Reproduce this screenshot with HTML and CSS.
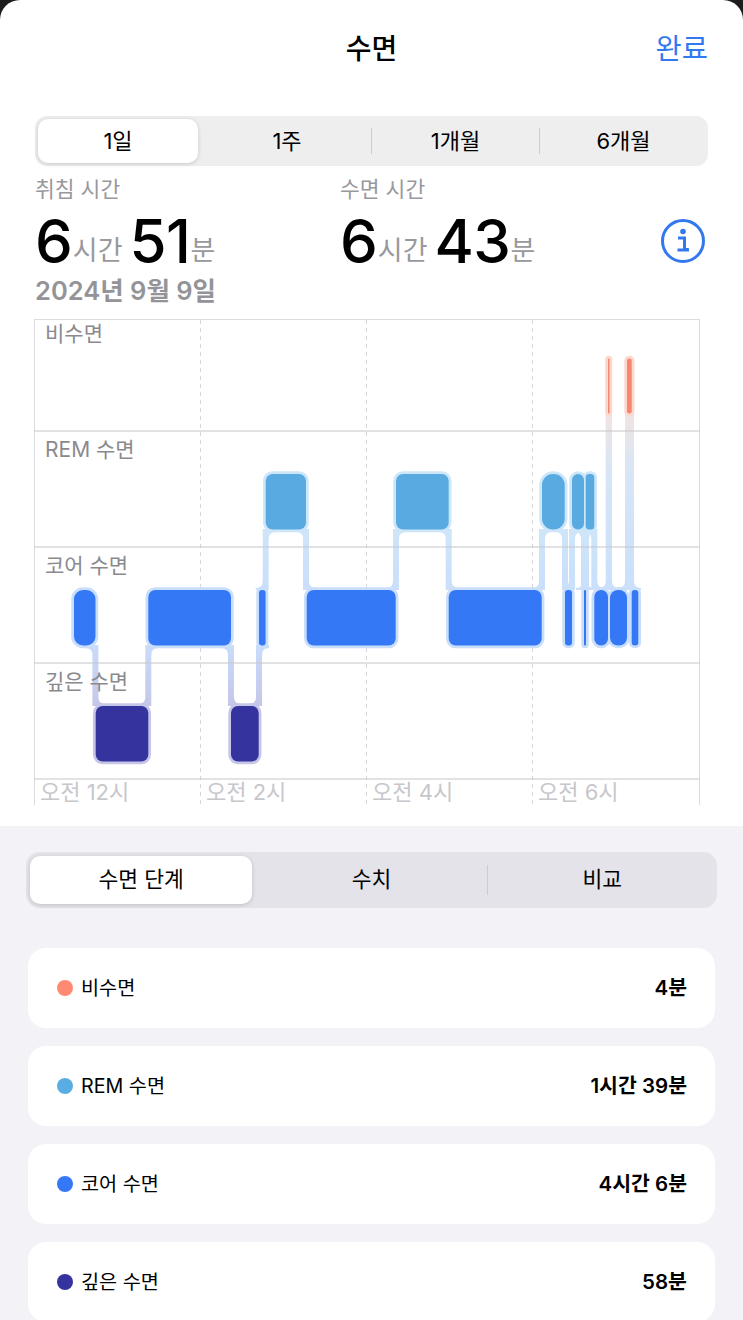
FILE: index.html
```html
<!DOCTYPE html>
<html lang="ko">
<head>
	<meta charset="utf-8">
	<title>수면</title>
	<link rel="stylesheet" href="styles.css">
</head>
<body>
	<div class="sheet">
		<header class="topbar">
			<span></span>
			<h1 class="title">수면</h1>
			<a class="done">완료</a>
		</header>

		<!-- range picker -->
		<div class="seg seg-range">
			<div class="seg-item selected">1일</div>
			<div class="seg-item">1주</div>
			<div class="seg-item divided">1개월</div>
			<div class="seg-item divided">6개월</div>
		</div>

		<div class="stats">
			<div class="stat stat-bed">
				<div class="stat-label">취침 시간</div>
				<div class="stat-value"><b>6</b><span class="unit">시간</span><b class="next">51</b><span class="unit">분</span></div>
				<div class="stat-date">2024년 9월 9일</div>
			</div>
			<div class="stat">
				<div class="stat-label">수면 시간</div>
				<div class="stat-value"><b>6</b><span class="unit">시간</span><b class="next">43</b><span class="unit">분</span></div>
			</div>
			<svg class="info" width="46" height="46" viewBox="0 0 46 46">
				<circle cx="23" cy="23" r="20.5" fill="none" stroke="#3478f0" stroke-width="3"/>
				<circle cx="23" cy="13.5" r="2.8" fill="#3478f0"/>
				<path d="M18 20H24.5V31.5H28.5M17.5 32H29" fill="none" stroke="#3478f0" stroke-width="3"/>
			</svg>
		</div>

		<!-- y/x values are page pixels, viewBox starts at the chart top -->
		<svg class="chart" width="743" height="510" viewBox="0 316 743 510">
			<defs>
				<linearGradient id="gradRem" gradientUnits="userSpaceOnUse" x1="0" y1="530" x2="0" y2="590">
					<stop offset="0" stop-color="#cfe5f9"/>
					<stop offset="1" stop-color="#c9dffb"/>
				</linearGradient>
				<linearGradient id="gradDeep" gradientUnits="userSpaceOnUse" x1="0" y1="646" x2="0" y2="706">
					<stop offset="0" stop-color="#c9dcfa"/>
					<stop offset="1" stop-color="#c5c6e8"/>
				</linearGradient>
				<linearGradient id="gradAwake" gradientUnits="userSpaceOnUse" x1="0" y1="356" x2="0" y2="590">
					<stop offset="0" stop-color="#fbd9cf"/>
					<stop offset="0.25" stop-color="#f1e4e2"/>
					<stop offset="0.5" stop-color="#d6e6f7"/>
					<stop offset="1" stop-color="#c9dffb"/>
				</linearGradient>

				<path id="remA" fill="url(#gradRem)" d="M-10 529H3V581Q3 588 10 588V590H-3V539Q-3 532 -10 532Z"/>
				<path id="remB" fill="url(#gradRem)" d="M10 529H-3V581Q-3 588 -10 588V590H3V539Q3 532 10 532Z"/>
				<path id="deepA" fill="url(#gradDeep)" d="M-10 645H3V697Q3 704 10 704V706H-3V655Q-3 648 -10 648Z"/>
				<path id="deepB" fill="url(#gradDeep)" d="M10 645H-3V697Q-3 704 -10 704V706H3V655Q3 648 10 648Z"/>

				<g id="barsAwake">
					<rect x="608" y="358.5" width="1.5" height="55" rx="0.7"/>
					<rect x="627" y="358.5" width="4.7" height="55" rx="2.3"/>
				</g>
				<g id="barsRem">
					<rect x="265.7" y="474" width="40.3" height="55.5" rx="7"/>
					<rect x="396" y="474" width="52.7" height="55.5" rx="7"/>
					<rect x="542" y="474" width="22.7" height="55.5" rx="11"/>
					<rect x="572" y="474" width="12" height="55.5" rx="6"/>
					<rect x="585.7" y="474" width="8.6" height="55.5" rx="3.5"/>
				</g>
				<g id="barsCore">
					<rect x="74" y="590" width="21.5" height="55.5" rx="9"/>
					<rect x="148.3" y="590" width="82.7" height="55.5" rx="7"/>
					<rect x="259" y="590" width="6.6" height="55.5" rx="3"/>
					<rect x="306.7" y="590" width="89" height="55.5" rx="7"/>
					<rect x="448.7" y="590" width="93" height="55.5" rx="7"/>
					<rect x="565" y="590" width="7" height="55.5" rx="3"/>
					<rect x="584" y="590" width="2" height="55.5" rx="1"/>
					<rect x="594.3" y="590" width="13.7" height="55.5" rx="6.8"/>
					<rect x="610" y="590" width="17" height="55.5" rx="8"/>
					<rect x="631.7" y="590" width="6.6" height="55.5" rx="3"/>
				</g>
				<g id="barsDeep">
					<rect x="95.7" y="706" width="52.6" height="55.5" rx="7"/>
					<rect x="231" y="706" width="27.7" height="55.5" rx="7"/>
				</g>
			</defs>

			<!-- links between stages -->
			<use href="#deepA" x="95.4"/>
			<use href="#deepB" x="148.3"/>
			<use href="#deepA" x="231"/>
			<use href="#deepB" x="259"/>
			<use href="#remB" x="265.7"/>
			<use href="#remA" x="306"/>
			<use href="#remB" x="396"/>
			<use href="#remA" x="448.7"/>
			<use href="#remB" x="542"/>
			<use href="#remA" x="565"/>
			<use href="#remB" x="572"/>
			<use href="#remA" x="584"/>
			<use href="#remB" x="586"/>
			<use href="#remA" x="594.3"/>
			<path fill="url(#gradAwake)" d="M605.7 360Q605.7 356 608.8 356Q612 356 612 360V581Q612 588 619 588V590H598.7V588Q605.7 588 605.7 581Z"/>
			<path fill="url(#gradAwake)" d="M625 360Q625 356 629.5 356Q634 356 634 360V581Q634 588 641 588V590H618V588Q625 588 625 581Z"/>

			<!-- grid -->
			<line class="grid-soft" x1="34" y1="319.5" x2="700" y2="319.5"/>
			<line class="grid-soft" x1="34.5" y1="319" x2="34.5" y2="805"/>
			<line class="grid-soft" x1="699.5" y1="319" x2="699.5" y2="805"/>
			<line class="grid-dash" x1="200.5" y1="320" x2="200.5" y2="805"/>
			<line class="grid-dash" x1="366.5" y1="320" x2="366.5" y2="805"/>
			<line class="grid-dash" x1="532.5" y1="320" x2="532.5" y2="805"/>
			<line class="grid-line" x1="34" y1="431" x2="700" y2="431"/>
			<line class="grid-line" x1="34" y1="547" x2="700" y2="547"/>
			<line class="grid-line" x1="34" y1="663" x2="700" y2="663"/>
			<line class="grid-line" x1="34" y1="779" x2="700" y2="779"/>

			<!-- blocks: halo pass, then solid pass so halos never cover a neighbour -->
			<use href="#barsAwake" class="halo-awake"/>
			<use href="#barsRem" class="halo-rem"/>
			<use href="#barsCore" class="halo-core"/>
			<use href="#barsDeep" class="halo-deep"/>
			<use href="#barsAwake" class="fill-awake"/>
			<use href="#barsRem" class="fill-rem"/>
			<use href="#barsCore" class="fill-core"/>
			<use href="#barsDeep" class="fill-deep"/>

			<text class="stage" x="45" y="341">비수면</text>
			<text class="stage" x="45" y="457">REM 수면</text>
			<text class="stage" x="45" y="573">코어 수면</text>
			<text class="stage" x="45" y="689">깊은 수면</text>
			<text class="hour" x="40" y="800">오전 12시</text>
			<text class="hour" x="206" y="800">오전 2시</text>
			<text class="hour" x="372" y="800">오전 4시</text>
			<text class="hour" x="538" y="800">오전 6시</text>
		</svg>
	</div>

	<main class="lower">
		<div class="seg seg-mode">
			<div class="seg-item selected">수면 단계</div>
			<div class="seg-item">수치</div>
			<div class="seg-item divided">비교</div>
		</div>

		<div class="card">
			<span class="dot dot-awake"></span>
			<span class="card-name">비수면</span>
			<span class="card-value">4분</span>
		</div>
		<div class="card">
			<span class="dot dot-rem"></span>
			<span class="card-name">REM 수면</span>
			<span class="card-value">1시간 39분</span>
		</div>
		<div class="card">
			<span class="dot dot-core"></span>
			<span class="card-name">코어 수면</span>
			<span class="card-value">4시간 6분</span>
		</div>
		<div class="card">
			<span class="dot dot-deep"></span>
			<span class="card-name">깊은 수면</span>
			<span class="card-value">58분</span>
		</div>
	</main>
</body>
</html>
```

FILE: styles.css
```css
* {
	box-sizing: border-box;
}

body {
	margin: 0;
	height: 1320px;
	overflow: hidden;
	background: #f2f2f7;
	font-family: Inter, "Noto Sans CJK KR", sans-serif;
	color: #000;
}

.sheet {
	height: 826px;
	background: #fff;
	border-radius: 20px 20px 0 0;
	box-shadow: 0 -20px 0 20px #1c1c1e;
}

/* header */
.topbar {
	height: 96px;
	display: grid;
	grid-template-columns: 1fr auto 1fr;
	align-items: center;
	padding: 0 35px 3px;
}

.title {
	margin: 0;
	font-size: 28px;
	font-weight: 500;
}

.done {
	justify-self: end;
	font-size: 28.5px;
	color: #3478f0;
}

/* segmented controls */
.seg {
	display: grid;
	grid-template-rows: minmax(0, 1fr);
}

.seg-range {
	margin: 20px 35px 0;
	width: 673px;
	height: 50px;
	grid-template-columns: repeat(4, 168px);
	background: #eeeeef;
	border-radius: 12px;
}

.seg-mode {
	margin: 0 26px;
	height: 56px;
	grid-template-columns: repeat(3, 1fr);
	background: #e3e3e9;
	border-radius: 14px;
}

.seg-item {
	display: flex;
	align-items: center;
	justify-content: center;
	margin: 12px 0;
	line-height: 1;
	font-size: 22px;
}

.seg-mode .seg-item {
	margin: 13px 0;
	font-size: 21.5px;
}

.seg-item.divided {
	border-left: 1px solid #cdcdd1;
}

.seg-item.selected {
	background: #fff;
	box-shadow: 0 1px 4px rgba(0, 0, 0, 0.16);
}

.seg-range .selected {
	margin: 3px 5px 3px 3px;
	border-radius: 10px;
}

.seg-mode .selected {
	margin: 4px 4px 4px 4px;
	border-radius: 10px;
}

/* totals above the chart */
.stats {
	height: 150px;
	display: flex;
	padding-left: 35px;
}

.stat-bed {
	width: 305px;
}

.stat-label {
	height: 46px;
	line-height: 46px;
	font-size: 21.5px;
	color: #98989d;
}

.stat-value {
	height: 58px;
	line-height: 58px;
	white-space: nowrap;
}

.stat-value b {
	font-size: 60px;
	font-weight: 500;
}

.stat-value .next {
	margin-left: 7px;
	letter-spacing: -0.5px;
}

.unit {
	position: relative;
	top: -3px;
	font-size: 27px;
	color: #98989d;
}

.stat-date {
	height: 40px;
	line-height: 42px;
	font-size: 25.5px;
	font-weight: 600;
	color: #949498;
}

.info {
	margin: 52px 0 0 auto;
	margin-right: 37px;
}

/* chart */
.chart {
	display: block;
}

.grid-soft {
	stroke: #dcdcde;
	stroke-width: 1;
}

.grid-line {
	stroke: #c6c6c9;
	stroke-width: 1;
}

.grid-dash {
	stroke: #d6d6d8;
	stroke-width: 1;
	stroke-dasharray: 4 4;
}

.halo-awake { fill: #fbd9cf; stroke: #fbd9cf; stroke-width: 5.5; }
.halo-rem { fill: #cde6f9; stroke: #cde6f9; stroke-width: 5.5; }
.halo-core { fill: #c9defb; stroke: #c9defb; stroke-width: 5.5; }
.halo-deep { fill: #c5c6e8; stroke: #c5c6e8; stroke-width: 5.5; }

.fill-awake { fill: #f5866f; }
.fill-rem { fill: #5aaae2; }
.fill-core { fill: #3478f6; }
.fill-deep { fill: #35339e; }

.stage {
	font-size: 21px;
	fill: #8a8a8e;
}

.hour {
	font-size: 22px;
	fill: #c7c7cb;
}

/* lower part */
.lower {
	padding-top: 26px;
}

.card {
	height: 80px;
	margin: 0 28px 18px;
	padding: 0 28px 4px 29px;
	display: flex;
	align-items: center;
	background: #fff;
	border-radius: 18px;
	font-size: 19.7px;
}

.seg-mode + .card {
	margin-top: 40px;
}

.dot {
	width: 16px;
	height: 16px;
	margin-top: 4px;
	margin-right: 8px;
	border-radius: 50%;
}

.dot-awake { background: #ff8a73; }
.dot-rem { background: #5aade2; }
.dot-core { background: #3478f6; }
.dot-deep { background: #35339e; }

.card-value {
	margin-left: auto;
	font-size: 20.5px;
	font-weight: 600;
}
```
